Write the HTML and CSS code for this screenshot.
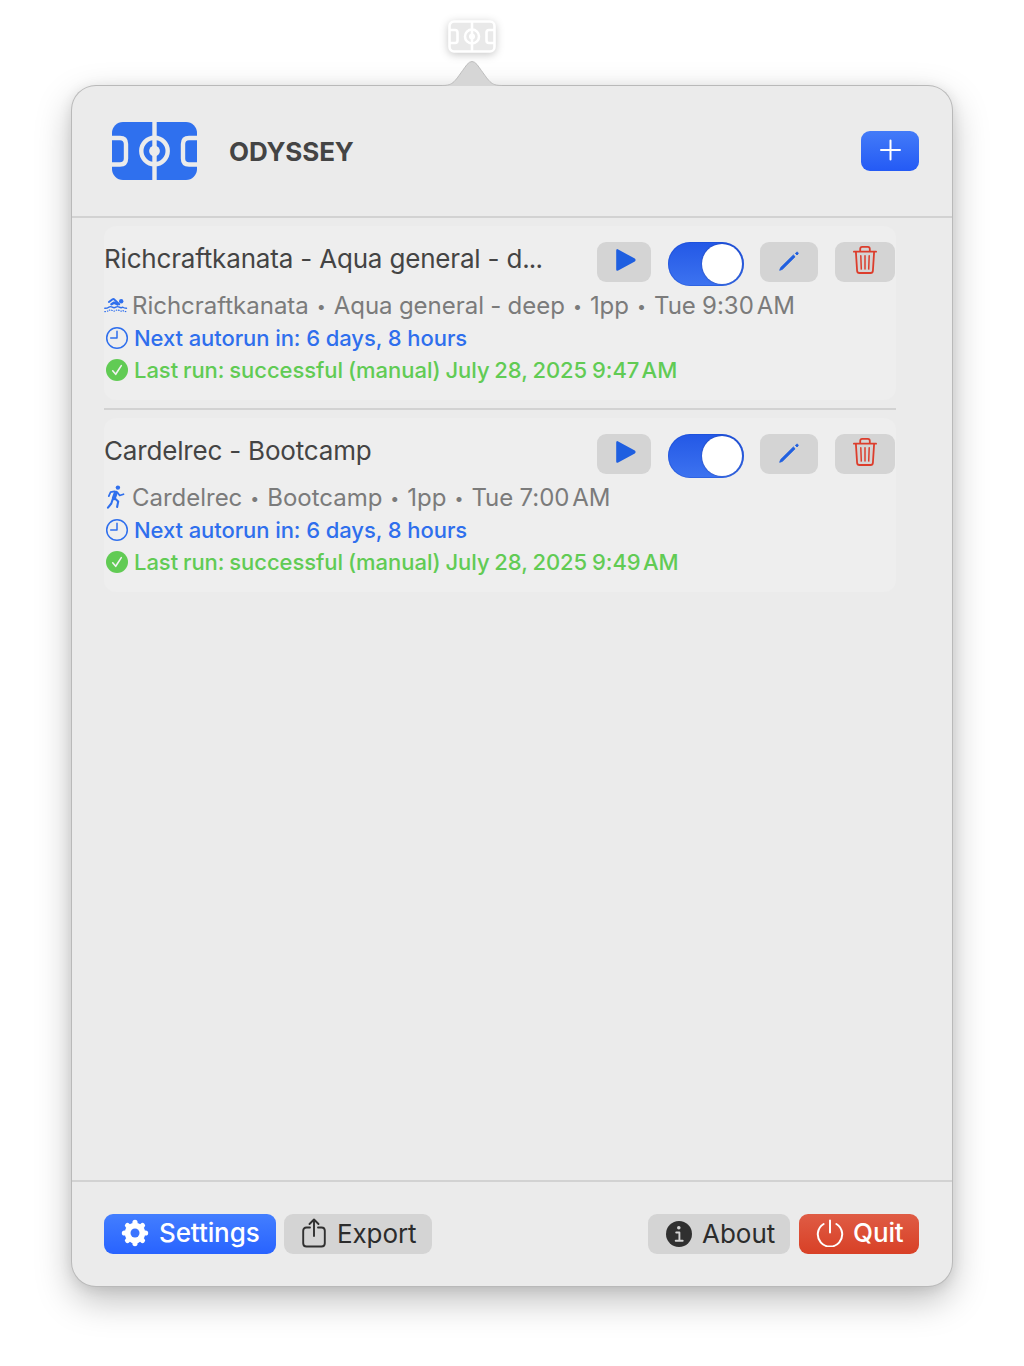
FILE: index.html
```html
<!DOCTYPE html>
<html lang="en">
<head>
<meta charset="utf-8">
<title>Odyssey</title>
<link rel="stylesheet" href="styles.css">
</head>
<body>
<svg width="0" height="0" class="defs">
  <symbol id="play" viewBox="0 0 20 22"><path d="M.2 1.600Q.2-.6 2.200.4L18.800 9.600q1.600 1.400 0 2.800L2.200 21.400Q.2 22.600.2 20.400z" fill="#1f5fe0"/></symbol>
  <symbol id="pencil" viewBox="0 0 22 22"><path d="M1.700 20.300l1-2.700L15.400 5l1.700 1.700L4.400 19.300z" fill="#1f5fe0" stroke="#1f5fe0" stroke-width=".9" stroke-linejoin="round"/><path d="M17.400 3.400l.9-.9q.9-.7 1.600 0t0 1.600l-.9.9z" fill="#1f5fe0" stroke="#1f5fe0" stroke-width=".9"/></symbol>
  <symbol id="trash" viewBox="0 0 26 30"><g fill="none" stroke="#dc3d2c" stroke-width="1.800" stroke-linecap="round" stroke-linejoin="round"><path d="M1.900 6.700h22.200M8.200 6.500V3.900Q8.200 1.900 10.200 1.900h5.600q2 0 2 2v2.600M3.900 7l1.200 18.800q.2 2.200 2.300 2.200h11.200q2.100 0 2.300-2.200L22.100 7"/><path d="M8.800 10.700l.5 13.400M13 10.700v13.400M17.200 10.700l-.5 13.400" stroke-width="1.500"/></g></symbol>
  <symbol id="clock" viewBox="0 0 24 24"><circle cx="12" cy="12" r="10.300" fill="none" stroke="#2f6fed" stroke-width="1.500"/><path d="M12 5.300V12H5.700" fill="none" stroke="#2f6fed" stroke-width="1.500" stroke-linecap="round" stroke-linejoin="round"/></symbol>
  <symbol id="check" viewBox="0 0 24 24"><circle cx="12" cy="12" r="11" fill="#61cb54"/><path d="M7.700 12.800l3 3.500 5.600-8.700" fill="none" stroke="#f2f2f2" stroke-width="1.600" stroke-linecap="round" stroke-linejoin="round"/></symbol>
</svg>
<main class="screen">
  <svg class="menu-icon" width="48" height="33" viewBox="0 0 48 33"><rect x="1.500" y="1.500" width="45" height="30" rx="4.500" fill="#e9e9e9"/><g fill="none" stroke="#fff" stroke-width="2.600"><rect x="1.500" y="1.500" width="45" height="30" rx="4.500"/><path d="M24 2v29M2 10h5q2.500 0 2.500 2.500v8Q9.500 23 7 23H2M46 10h-5q-2.500 0-2.500 2.500v8q0 2.500 2.500 2.500h5"/><circle cx="24" cy="16.500" r="7"/></g><circle cx="24" cy="16.500" r="3" fill="#fff"/></svg>
  <svg class="arrow" width="66" height="26" viewBox="0 0 66 26"><path d="M3 25.500C15 25.500 15 22 28 4.500Q33-1.500 38 4.500C51 22 51 25.500 63 25.500V26H3z" fill="#d6d6d6"/><path d="M3 25.500C15 25.500 15 22 28 4.500Q33-1.500 38 4.500C51 22 51 25.500 63 25.500" fill="none" stroke="#bdbdbd"/></svg>
  <section class="popover">
    <header class="header">
      <svg class="logo" width="85" height="58" viewBox="0 0 85 58"><rect width="85" height="58" rx="11" fill="#2f70ee"/><g fill="none" stroke="#ebebeb" stroke-width="4.400"><path d="M42.500 0v58M0 16h8q6 0 6 6v14.500q0 6-6 6H0M85 16h-8q-6 0-6 6v14.500q0 6 6 6h8"/><circle cx="42.500" cy="29" r="13.200"/></g><circle cx="42.500" cy="29" r="5.400" fill="#ebebeb"/></svg>
      <h1 class="brand">ODYSSEY</h1>
      <button class="btn add"><svg width="22" height="22" viewBox="0 0 22 22"><path d="M11.500 1.500v19M2 11h19" stroke="#fff" stroke-width="2" stroke-linecap="round"/></svg></button>
    </header>
    <div class="list">
      <article class="card">
        <div class="card-head">
          <h2 class="title">Richcraftkanata - Aqua general - d<span class="ellipsis">...</span></h2>
          <button class="btn play"><svg width="20" height="22"><use href="#play"/></svg></button>
          <span class="toggle"><span class="knob"></span></span>
          <button class="btn edit"><svg width="22" height="22"><use href="#pencil"/></svg></button>
          <button class="btn delete"><svg width="26" height="30"><use href="#trash"/></svg></button>
        </div>
        <p class="line sub"><svg width="24" height="24" viewBox="0 0 24 24"><g fill="none" stroke="#2f6fed" stroke-linecap="round" stroke-linejoin="round"><path d="M4.900 8L8.600 5.300q.8-.5 1.600.1l5 4.800" stroke-width="2"/><path d="M7.400 10.200l2.800-1.600 3.400 1.900" stroke-width="2.400"/><path d="M.8 14.300q2.700-.1 4-1.100 1.700-1.100 3.500 0t3.500 0 3.500 0 3.500 0q1.400 1 3.700 1.100" stroke-width="1.400"/><path d="M.8 17.600q2.700-.1 4-1.100 1.700-1.100 3.500 0t3.500 0 3.500 0 3.500 0q1.400 1 3.700 1.100" stroke-width="1.200" stroke-dasharray=".5 1.900"/></g><circle cx="17.200" cy="7.300" r="2.200" fill="#2f6fed"/></svg><span class="text">Richcraftkanata <i class="dot">•</i> Aqua general - deep <i class="dot">•</i> 1pp <i class="dot">•</i> Tue 9:30<span class="ampm">&#8239;AM</span></span></p>
        <p class="line next"><svg width="24" height="24"><use href="#clock"/></svg><span class="text">Next autorun in: 6 days, 8 hours</span></p>
        <p class="line last"><svg width="24" height="24"><use href="#check"/></svg><span class="text">Last run: successful (manual) July 28, 2025 9:47<span class="ampm">&#8239;AM</span></span></p>
      </article>
      <hr class="rule">
      <article class="card">
        <div class="card-head">
          <h2 class="title">Cardelrec - Bootcamp</h2>
          <button class="btn play"><svg width="20" height="22"><use href="#play"/></svg></button>
          <span class="toggle"><span class="knob"></span></span>
          <button class="btn edit"><svg width="22" height="22"><use href="#pencil"/></svg></button>
          <button class="btn delete"><svg width="26" height="30"><use href="#trash"/></svg></button>
        </div>
        <p class="line sub"><svg class="runner" width="24" height="24" viewBox="0 0 24 24"><circle cx="13.900" cy="2.600" r="2.200" fill="#2f6fed"/><g fill="none" stroke="#2f6fed" stroke-linecap="round" stroke-linejoin="round"><path d="M11.800 7.700L9.800 13.200" stroke-width="4"/><path d="M10.500 6.300L6.600 7.200 4.800 11.200M13.500 7.500l2.200 3 3.800-1.300" stroke-width="1.700"/><path d="M11 13.500l3.200 3-1.100 5.500M8.600 14.500l-1.300 4L4 22.600" stroke-width="2.100"/></g></svg><span class="text">Cardelrec <i class="dot">•</i> Bootcamp <i class="dot">•</i> 1pp <i class="dot">•</i> Tue 7:00<span class="ampm">&#8239;AM</span></span></p>
        <p class="line next"><svg width="24" height="24"><use href="#clock"/></svg><span class="text">Next autorun in: 6 days, 8 hours</span></p>
        <p class="line last"><svg width="24" height="24"><use href="#check"/></svg><span class="text">Last run: successful (manual) July 28, 2025 9:49<span class="ampm">&#8239;AM</span></span></p>
      </article>
    </div>
    <footer class="footer">
      <button class="btn settings"><svg width="28" height="28" viewBox="0 0 28 28"><g fill="#fff"><circle cx="14" cy="14" r="10.300"/><g stroke="#fff" stroke-width="5.200" stroke-linecap="round"><path d="M14 3.400v21.200M3.400 14h21.200M6.500 6.500l15 15M21.500 6.500l-15 15"/></g></g><circle cx="14" cy="14" r="4.500" fill="#3a74ff"/></svg>Settings</button>
      <button class="btn export"><svg width="24" height="30" viewBox="0 0 24 30"><path d="M8 9.500H4.500Q1.200 9.500 1.200 12.800v12.400q0 3.300 3.300 3.300h15q3.300 0 3.300-3.300V12.800q0-3.300-3.300-3.300H16M12 18V1.500M7.500 6L12 1.500 16.500 6" fill="none" stroke="#303030" stroke-width="1.900" stroke-linecap="round" stroke-linejoin="round"/></svg>Export</button>
      <button class="btn about"><svg width="26" height="26" viewBox="0 0 26 26"><circle cx="13" cy="13" r="13" fill="#303030"/><circle cx="12.800" cy="6.800" r="1.800" fill="#d4d4d4"/><path d="M10.200 11.500h3.200v8M9.700 19.700h7" fill="none" stroke="#d4d4d4" stroke-width="1.900" stroke-linecap="round" stroke-linejoin="round"/></svg>About</button>
      <button class="btn quit"><svg width="28" height="28" viewBox="0 0 28 28"><path d="M14 1.500v12M7.600 5A12.200 12.200 0 1 0 20.400 5" fill="none" stroke="#fff" stroke-width="2" stroke-linecap="round"/></svg>Quit</button>
    </footer>
  </section>
</main>
</body>
</html>
```
FILE: styles.css
```css
* { box-sizing: border-box; }
body { margin: 0; background: #fff; font-family: Inter, "Liberation Sans", sans-serif; }
h1, h2, p { margin: 0; font-weight: 400; }
.defs { display: block; }
.text { white-space: pre; }
.screen { height: 1366px; padding: 20px 72px 80px; display: flex; flex-direction: column; align-items: stretch; overflow: hidden; }
.menu-icon { flex: none; margin-left: 376px; filter: drop-shadow(0 2px 4px rgba(0,0,0,.22)); }
.arrow { position: relative; z-index: 1; flex: none; margin: 7px 0 0 367px; }
.popover { flex: none; height: 1200px; display: flex; flex-direction: column; background: #ebebeb; border-radius: 24px; box-shadow: 0 0 0 1px #b9b9b9, 0 14px 36px rgba(0,0,0,.26), 0 2px 14px rgba(0,0,0,.1); }
.header { flex: none; height: 132px; padding: 0 33px 0 40px; display: flex; align-items: center; border-bottom: 2px solid #d2d2d2; }
.brand { flex: 1; margin-left: 32px; font-size: 26px; font-weight: 700; letter-spacing: -.12px; color: #444; }
.btn { flex: none; height: 40px; padding: 0; border: 0; border-radius: 9px; background: #d4d4d4; display: flex; align-items: center; font: 400 26px/40px Inter, "Liberation Sans", sans-serif; color: #2c2c2c; }
.add { width: 58px; padding: 0 0 3px 18px; background: linear-gradient(#437bf8, #245af5); }
.list { flex: 1; min-height: 0; padding: 8px 56px 0 32px; }
.card { height: 174px; padding-top: 16px; border-radius: 12px; background: #eee; }
.card-head { display: flex; height: 44px; margin-bottom: 4px; }
.title { flex: none; width: 493px; font-size: 26px; line-height: 34px; letter-spacing: -.18px; color: #444; white-space: nowrap; }
.ellipsis { letter-spacing: -.9px; }
.play { width: 54px; padding: 0 0 4px 19px; }
.toggle { flex: none; width: 76px; height: 44px; margin: 0 16px 0 17px; padding: 2px; border-radius: 22px; display: flex; justify-content: flex-end; background: linear-gradient(#2358e6, #3d73f0); box-shadow: inset 0 0 0 1px rgba(20,70,200,.35); }
.knob { width: 40px; height: 40px; border-radius: 50%; background: #fff; box-shadow: 0 0 2px rgba(0,0,60,.4); }
.edit { width: 58px; padding: 0 0 2px 18px; }
.delete { width: 60px; margin-left: 17px; padding: 0 0 4px 17px; }
.line { display: flex; align-items: center; height: 32px; gap: 5px; padding-left: 1px; font-size: 22px; font-weight: 500; }
.sub { gap: 4px; padding-left: 0; font-size: 24px; font-weight: 400; letter-spacing: -.02px; word-spacing: -.4px; color: #7b7b7b; }
.sub .text { padding-bottom: 2px; }
.runner { margin-bottom: 2px; }
.dot { display: inline-block; width: 12.3px; font-size: 16px; font-style: normal; line-height: 1; text-align: center; vertical-align: 2px; }
.ampm { margin-left: -1.5px; }
.next { letter-spacing: -.08px; color: #2f6fed; }
.last { letter-spacing: -.04px; word-spacing: -1px; color: #61cb54; }
.rule { height: 2px; margin: 8px 0; border: 0; background: #d2d2d2; }
.footer { flex: none; height: 106px; padding: 32px 33px 0 32px; display: flex; border-top: 2px solid #d2d2d2; }
.settings { width: 172px; padding: 0 0 2px 17px; gap: 10px; font-weight: 500; letter-spacing: -.1px; color: #fff; background: linear-gradient(#437eff, #2863ff); }
.export { width: 148px; margin-left: 8px; padding-left: 18px; gap: 11px; letter-spacing: -.1px; }
.export svg { margin-bottom: 2px; }
.about { width: 142px; margin-left: auto; padding-left: 18px; gap: 10px; }
.quit { width: 120px; margin-left: 9px; padding: 0 0 2px 17px; gap: 9px; font-weight: 500; letter-spacing: -.1px; color: #fff; background: linear-gradient(#df5c45, #d84026); }
```
